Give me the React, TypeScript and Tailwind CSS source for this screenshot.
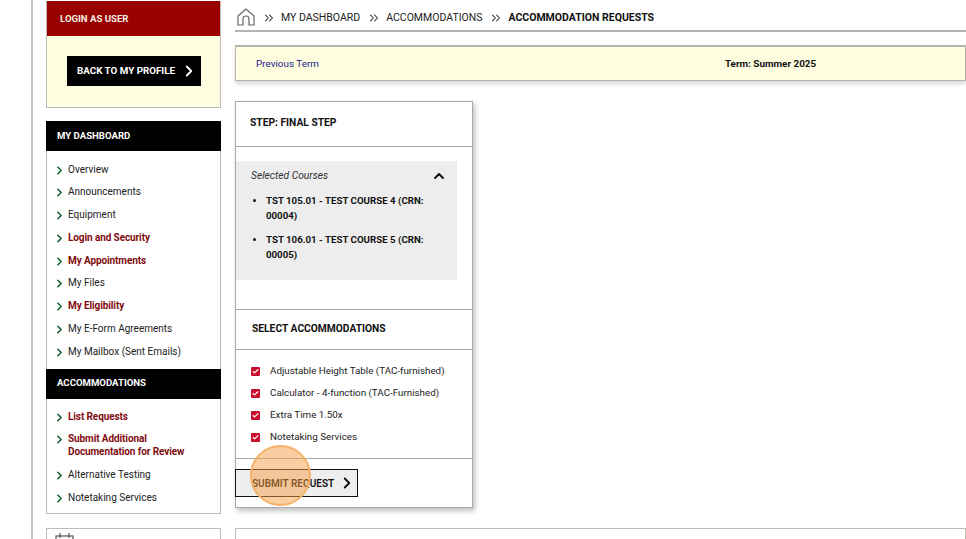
import { ChevronRight, ChevronUp, Check, ChevronsRight } from "lucide-react"

const dashboardLinks = [
  { label: "Overview" },
  { label: "Announcements" },
  { label: "Equipment" },
  { label: "Login and Security", bold: true },
  { label: "My Appointments", bold: true },
  { label: "My Files" },
  { label: "My Eligibility", bold: true },
  { label: "My E-Form Agreements" },
  { label: "My Mailbox (Sent Emails)" },
]

const accommodationLinks = [
  { label: "List Requests", bold: true },
  { label: "Submit Additional Documentation for Review", bold: true },
  { label: "Alternative Testing" },
  { label: "Notetaking Services" },
]

const accommodations = [
  "Adjustable Height Table (TAC-furnished)",
  "Calculator - 4-function (TAC-Furnished)",
  "Extra Time 1.50x",
  "Notetaking Services",
]

const courses = [
  "TST 105.01 - TEST COURSE 4 (CRN: 00004)",
  "TST 106.01 - TEST COURSE 5 (CRN: 00005)",
]

function NavList({ links, className }: { links: { label: string; bold?: boolean }[]; className: string }) {
  return (
    <ul className={className}>
      {links.map((l) => (
        <li key={l.label} className="flex pr-[14px] mb-[10.3px] text-[10px] leading-[12.5px]">
          <ChevronRight className="w-[13px] h-[13px] -mb-[0.5px] ml-[6px] mr-[2px] shrink-0 text-[#166534]" strokeWidth={3} />
          <span className={l.bold ? "font-bold tracking-[-0.1px] text-[#7f0c10]" : "text-[#222]"}>{l.label}</span>
        </li>
      ))}
    </ul>
  )
}

function Crumb() {
  return <ChevronsRight className="w-[14px] h-[14px] ml-[7px] mr-[5px] shrink-0 text-[#333]" strokeWidth={1.8} />
}

function Breadcrumb() {
  return (
    <div className="h-[32px] border-b-2 border-[#b5b5b0] flex items-center pt-[5px] pl-[2px] text-[10.5px] text-[#222]">
      <svg width="18" height="18" viewBox="0 0 18 18" fill="none" stroke="#666" strokeWidth="1.2" className="shrink-0 -mt-[1px]">
        <path d="M1 8 L9 1 L17 8 V17 H12 V11 C12 9 11 8 9 8 C7 8 6 9 6 11 V17 H1 Z" />
      </svg>
      <Crumb />
      <span>MY DASHBOARD</span>
      <Crumb />
      <span>ACCOMMODATIONS</span>
      <Crumb />
      <span className="font-bold text-[#111]">ACCOMMODATION REQUESTS</span>
    </div>
  )
}

function RequestCard() {
  return (
    <div className="relative w-[238px] h-[407px] mt-[20px] border border-[#a9a9a9] bg-white shadow-[2px_3px_5px_rgba(0,0,0,0.25)]">
      <div className="h-[45px] border-b border-[#a9a9a9] flex items-center pl-[14px] pb-[2px] text-[10.25px] font-bold text-[#111]">
        STEP: FINAL STEP
      </div>
      <div className="h-[163px] pt-[14px] border-b border-[#a9a9a9]">
        <div className="w-[221px] h-[119px] bg-[#ededed] pt-[8px] pl-[15px] pr-[10px]">
          <div className="flex items-center justify-between h-[13px] text-[10.25px] italic text-[#333]">
            Selected Courses
            <ChevronUp className="w-[16px] h-[16px] text-[#111]" strokeWidth={3} />
          </div>
          <ul className="mt-[11px] ml-[15px] mr-[16px] list-disc text-[9.7px] leading-[15.3px] font-bold text-[#111]">
            {courses.map((c) => (
              <li key={c} className="mb-[8px]">{c}</li>
            ))}
          </ul>
        </div>
      </div>
      <div className="h-[40px] border-b border-[#a9a9a9] flex items-center pl-[16px] pb-[2px] text-[10.25px] font-bold text-[#111]">
        SELECT ACCOMMODATIONS
      </div>
      <div className="h-[109px] pt-[10px] border-b border-[#a9a9a9]">
        {accommodations.map((a) => (
          <div key={a} className="flex items-center h-[22px] pl-[15px] text-[9.8px] text-[#222]">
            <span className="w-[9px] h-[9px] rounded-[1px] bg-[#c8102e] flex items-center justify-center shrink-0">
              <Check className="w-[7px] h-[7px] text-white" strokeWidth={4} />
            </span>
            <span className="ml-[10px]">{a}</span>
          </div>
        ))}
      </div>
      <button className="mt-[10px] -ml-[1px] w-[123px] h-[28px] border border-[#111] bg-[#eeeeee] flex items-center pl-[16px] text-[10px] font-semibold whitespace-nowrap text-[#111]">
        SUBMIT REQUEST
        <ChevronRight className="w-[18px] h-[18px] ml-[4px] shrink-0" strokeWidth={2.6} />
      </button>
      {/* click marker over the button */}
      <div className="absolute left-[14px] top-[343px] w-[61px] h-[61px] rounded-full border-2 border-[#f6b26b] bg-[#f59e42]/50" />
    </div>
  )
}

export default function App() {
  return (
    <div className="h-[539px] overflow-hidden bg-white font-['Roboto',sans-serif]">
      <div className="h-full ml-[31px] border-l-2 border-[#c4c4c4] pl-[13px] flex gap-[14px]">
        <aside className="w-[175px] shrink-0 pt-[1px]">
          <div className="h-[107px] border border-[#bdbdb5] border-t-0 bg-[#fefde0]">
            <div className="h-[35px] bg-[#990000] flex items-center pl-[13px] pt-[1px] text-[9.6px] font-bold text-[#f2eee0]">
              LOGIN AS USER
            </div>
            <div className="ml-[20px] mt-[20px] w-[134px] h-[30px] bg-black flex items-center pl-[10px] text-[9.8px] font-bold whitespace-nowrap text-white">
              BACK TO MY PROFILE
              <ChevronRight className="w-[18px] h-[18px] ml-[5px] shrink-0" strokeWidth={2.4} />
            </div>
          </div>
          <div className="mt-[13px] border border-[#bdbdb5] border-t-0 h-[393px]">
            <div className="h-[30px] -mx-[1px] bg-black flex items-center pl-[11px] text-[9.6px] font-bold text-white">
              MY DASHBOARD
            </div>
            <NavList links={dashboardLinks} className="pt-[12.5px]" />
            <div className="h-[30px] mt-[2px] -mx-[1px] bg-black flex items-center pl-[11px] text-[9.6px] font-bold text-white">
              ACCOMMODATIONS
            </div>
            <NavList links={accommodationLinks} className="pt-[12px]" />
          </div>
          <div className="mt-[14px] h-[30px] border border-[#bdbdb5] pl-[8px] pt-[4px]">
            <svg width="20" height="12" viewBox="0 0 20 12" fill="none" stroke="#555" strokeWidth="1.2">
              <rect x="1" y="3" width="17" height="12" />
              <path d="M5 0V5M14 0V5M1 7H18" />
            </svg>
          </div>
        </aside>
        <main className="flex-1 min-w-0">
          <Breadcrumb />
          <div className="mt-[13px] h-[36px] border border-[#b5b5b0] border-t-2 bg-[#fefde0] shadow-[0_3px_4px_rgba(0,0,0,0.15)] flex items-center pt-[1px] text-[9.9px]">
            <span className="ml-[20px] text-[#1a1a8c]">Previous Term</span>
            <span className="ml-[406px] font-bold text-[#111]">Term: Summer 2025</span>
          </div>
          <RequestCard />
          <div className="mt-[20px] h-[30px] border border-[#bdbdb5]" />
        </main>
      </div>
    </div>
  )
}
